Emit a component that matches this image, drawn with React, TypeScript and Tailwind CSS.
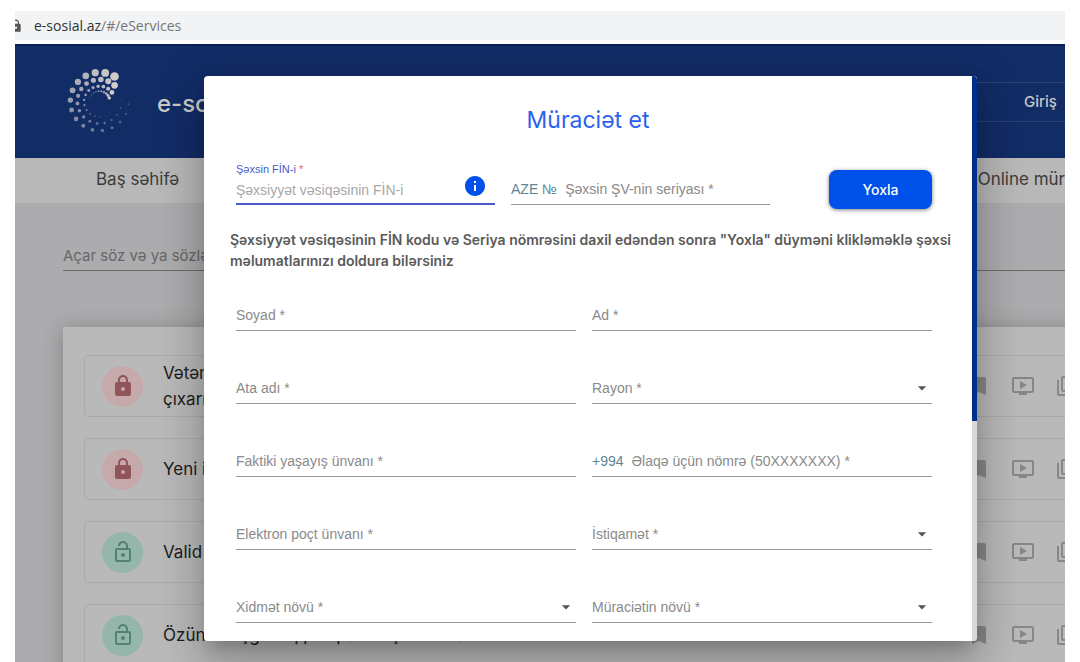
import React from 'react';
import {
  MdArrowDropDown,
  MdBookmark,
  MdInfo,
  MdLock,
  MdOndemandVideo,
  MdOutlineLibraryBooks,
  MdOutlineLockOpen,
} from 'react-icons/md';

const services = [
  { title: ['Vətən', 'çıxarı'], locked: true },
  { title: ['Yeni i'], locked: true },
  { title: ['Valid'], locked: false },
  { title: ['Özünüməşğulluq proqramı üçün müraciət'], locked: false },
];

// rings of the logo: radius, start angle, biggest and smallest dot
const rings = [
  { radius: 87, start: -59, count: 16, max: 13, min: 3 },
  { radius: 66, start: -47, count: 17, max: 10, min: 2 },
  { radius: 46, start: -36, count: 16, max: 7, min: 1 },
  { radius: 31, start: -20, count: 12, max: 5, min: 1 },
];

function Logo() {
  return (
    <svg viewBox="0 0 200 200" className="h-[67px] w-[67px]" aria-hidden="true">
      {rings.map((ring) =>
        Array.from({ length: ring.count }, (_, i) => {
          const angle = ((ring.start - i * (ring.radius > 40 ? 19.7 : 15)) * Math.PI) / 180;
          const t = i / (ring.count - 1);
          return (
            <circle
              key={`${ring.radius}-${i}`}
              cx={100 + ring.radius * Math.cos(angle)}
              cy={100 + ring.radius * Math.sin(angle)}
              r={ring.max - (ring.max - ring.min) * Math.pow(t, 0.75)}
              fill="#cfcdca"
              opacity={1 - t * 0.75}
            />
          );
        }),
      )}
    </svg>
  );
}

type FieldProps = {
  id: string;
  label: string;
  prefix?: string;
  select?: boolean;
};

function Field({ id, label, prefix, select }: FieldProps) {
  return (
    <div className="flex h-7 items-center border-b border-[#979797] pb-1 text-sm text-[#8a8a8a]">
      {prefix && <span className="mr-2 whitespace-nowrap text-[#5f8596]">{prefix}</span>}
      <label htmlFor={id} className="whitespace-nowrap">{label}</label>
      {select ? (
        <>
          <select id={id} className="min-w-0 flex-1 appearance-none bg-transparent outline-none" />
          <MdArrowDropDown className="h-6 w-5 text-[#555]" />
        </>
      ) : (
        <input id={id} type="text" className="w-0 min-w-0 flex-1 bg-transparent outline-none" />
      )}
    </div>
  );
}

function ServiceRow({ title, locked }: { title: string[]; locked: boolean }) {
  return (
    <li className="flex h-[62px] items-center rounded-sm border border-[#aaaaaa] pl-[17px] pr-3">
      <span
        className={`flex h-[41px] w-[41px] shrink-0 items-center justify-center rounded-full ${
          locked ? 'bg-[#c6a9aa] text-[#8f5558]' : 'bg-[#94b6ac] text-[#55826f]'
        }`}
      >
        {locked ? <MdLock className="h-6 w-6" /> : <MdOutlineLockOpen className="h-6 w-6" />}
      </span>
      <a href="#" className="ml-5 flex-1 whitespace-nowrap text-[17px] leading-[26px] text-[#1c1c22]">
        {title.map((line) => (
          <span key={line} className="block">{line}</span>
        ))}
      </a>
      <div className="flex gap-5 text-[#878787]">
        <MdBookmark className="h-6 w-6" />
        <MdOndemandVideo className="h-6 w-6" />
        <MdOutlineLibraryBooks className="h-6 w-6" />
      </div>
    </li>
  );
}

function RequestDialog() {
  return (
    <div
      role="dialog"
      aria-labelledby="dialog-title"
      className="absolute bottom-[21px] left-[189px] right-[88px] top-[65px] flex overflow-hidden rounded-sm bg-white font-['Liberation_Sans',sans-serif] shadow-[0_11px_15px_-7px_rgba(0,0,0,0.2),0_24px_38px_3px_rgba(0,0,0,0.14),0_9px_46px_8px_rgba(0,0,0,0.12)]"
    >
      <form className="flex-1 overflow-hidden">
        <h2 id="dialog-title" className="pt-7 text-center font-[Inter,sans-serif] text-[23px] leading-8 text-[#2a62f0]">
          Müraciət et
        </h2>

        <div className="flex items-end pl-8 pr-10 pt-[25px]">
          <div className="flex-[259]">
            <label htmlFor="fin" className="block text-[11px] leading-4 text-[#4a5bcb]">
              Şəxsin FİN-i <span className="text-[#f06078]">*</span>
            </label>
            <div className="flex h-7 items-center border-b-2 border-[#4a5bc4]">
              <input
                id="fin"
                type="text"
                placeholder="Şəxsiyyət vəsiqəsinin FİN-i"
                className="w-0 min-w-0 flex-1 bg-transparent text-sm outline-none placeholder:text-[#a8a8a8]"
              />
              <MdInfo className="mb-2 mr-2 h-6 w-6 text-[#0050ea]" />
            </div>
          </div>
          <div className="ml-4 flex-[259]">
            <Field id="series" prefix="AZE №" label="Şəxsin ŞV-nin seriyası *" />
          </div>
          <div className="ml-[59px] h-[35px] shrink-0">
            <button
              type="button"
              className="h-[39px] w-[103px] rounded-lg bg-[#0050ea] font-[Inter,sans-serif] text-sm font-medium text-white shadow-[0_1px_4px_rgba(0,0,0,0.5)]"
            >
              Yoxla
            </button>
          </div>
        </div>

        <p className="whitespace-nowrap pl-[26px] pt-6 font-[Inter,sans-serif] text-sm font-semibold leading-[21px] text-[#5a5a5a]">
          Şəxsiyyət vəsiqəsinin FİN kodu və Seriya nömrəsini daxil edəndən sonra "Yoxla" düyməni klikləməklə şəxsi
          <br />
          məlumatlarınızı doldura bilərsiniz
        </p>

        <div className="grid grid-cols-2 gap-x-4 gap-y-[45px] pl-8 pr-10 pt-8">
          <Field id="surname" label="Soyad *" />
          <Field id="name" label="Ad *" />
          <Field id="father" label="Ata adı *" />
          <Field id="district" label="Rayon *" select />
          <Field id="address" label="Faktiki yaşayış ünvanı *" />
          <Field id="phone" prefix="+994" label="Əlaqə üçün nömrə (50XXXXXXX) *" />
          <Field id="email" label="Elektron poçt ünvanı *" />
          <Field id="direction" label="İstiqamət *" select />
          <Field id="service" label="Xidmət növü *" select />
          <Field id="request" label="Müraciətin növü *" select />
        </div>
      </form>

      {/* Scrollbar */}
      <div className="w-[5px] bg-[#d8d8d8]">
        <div className="h-[61%] bg-[#002f8e]"></div>
      </div>
    </div>
  );
}

export default function App() {
  return (
    <div className="h-screen overflow-hidden bg-white px-[15px] pt-[11px] font-[Inter,sans-serif]">
      <div className="relative flex h-full flex-col overflow-hidden bg-[#acacae]">
        <div className="flex h-[33px] shrink-0 items-center border-b-4 border-white bg-[#f1f3f4] font-['Open_Sans',sans-serif] text-sm text-[#777]">
          <MdLock className="-ml-1.5 h-3.5 w-3.5 text-[#555]" />
          <span className="ml-[11px]">
            <span className="text-[#333]">e-sosial.az</span>/#/eServices
          </span>
        </div>

        <header className="flex h-[114px] shrink-0 justify-between border-t-2 border-[#0a2058] bg-[#122c66]">
          <a href="#" className="flex pl-[51px] pt-[22px] text-[#c9c9c9]">
            <Logo />
            <span className="ml-6 pt-5 text-2xl font-medium leading-8">e-so</span>
          </a>
          <button type="button" className="-mr-5 mt-9 h-10 w-40 rounded border border-[#2b4272] pl-[98px] text-left text-[15px] font-medium text-[#c9c9c9]">
            Giriş
          </button>
        </header>

        <nav className="flex h-[45px] shrink-0 items-center justify-between bg-[#b8b8b8] pb-0.5 text-[17px] text-[#3c3c3c]">
          <a href="#" className="ml-[81px]">Baş səhifə</a>
          <a href="#" className="whitespace-nowrap">Online mür</a>
        </nav>

        <div className="ml-12 mt-10 flex h-7 shrink-0 border-b border-[#6c6c6c]">
          <input
            type="text"
            aria-label="Açar söz"
            placeholder="Açar söz və ya sözlər"
            className="flex-1 bg-transparent text-[15px] outline-none placeholder:text-[#666]"
          />
        </div>

        <ul className="-mr-12 ml-12 mt-14 flex shrink-0 flex-col gap-[21px] bg-[#b9b9b9] px-[21px] pb-5 pt-7 shadow-[0_2px_20px_rgba(0,0,0,0.25)]">
          {services.map((service) => (
            <ServiceRow key={service.title[0]} title={service.title} locked={service.locked} />
          ))}
        </ul>

        <RequestDialog />
      </div>
    </div>
  );
}
